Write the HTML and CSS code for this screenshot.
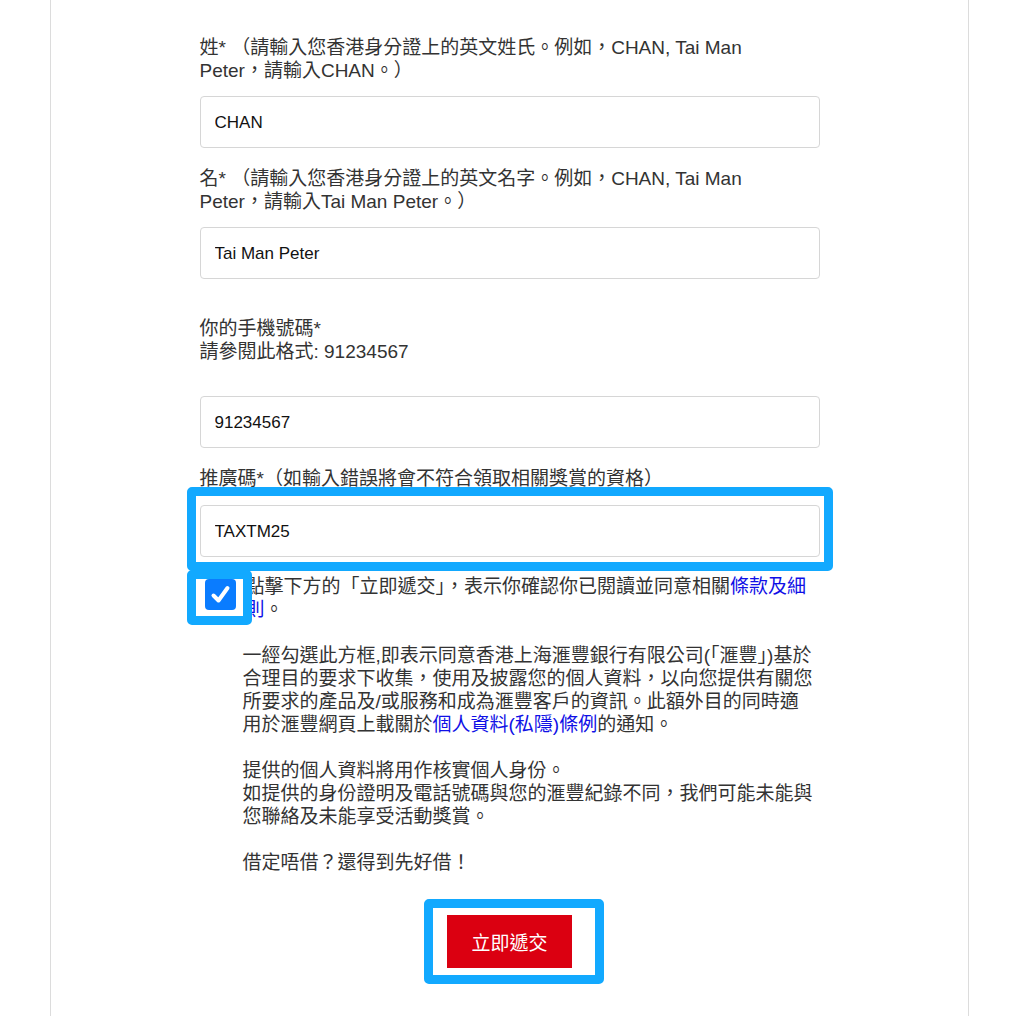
FILE: index.html
```html
<!DOCTYPE html>
<html lang="zh-Hant">
<head>
    <meta charset="UTF-8">
    <meta name="viewport" content="width=device-width, initial-scale=1.0">
    <title>立即遞交</title>
    <link rel="stylesheet" href="styles.css">
</head>
<body>
    <div class="page">
        <form class="form">
            <div class="field">
                <label class="field-label" for="surname">姓* （請輸入您香港身分證上的英文姓氏。例如，CHAN, Tai Man Peter，請輸入CHAN。）</label>
                <input type="text" id="surname" class="input-box" value="CHAN">
            </div>

            <div class="field">
                <label class="field-label" for="givenName">名* （請輸入您香港身分證上的英文名字。例如，CHAN, Tai Man Peter，請輸入Tai Man Peter。）</label>
                <input type="text" id="givenName" class="input-box" value="Tai Man Peter">
            </div>

            <div class="field field-phone">
                <label class="field-label" for="mobile">你的手機號碼*<br>請參閱此格式: 91234567</label>
                <input type="text" id="mobile" class="input-box" value="91234567">
            </div>

            <div class="field field-promo">
                <label class="field-label" for="promoCode">推廣碼*（如輸入錯誤將會不符合領取相關獎賞的資格）</label>
                <div class="highlight highlight-input">
                    <input type="text" id="promoCode" class="input-box" value="TAXTM25">
                </div>
            </div>

            <div class="consent">
                <span class="check-wrap">
                    <span class="check-box">
                        <svg width="31" height="31" viewBox="0 0 31 31">
                            <path d="M8.5 16.5 L13.5 21.5 L22.5 9" fill="none" stroke="#fff" stroke-width="4" stroke-linecap="round" stroke-linejoin="round"/>
                        </svg>
                    </span>
                </span>
                <p class="consent-text">點擊下方的「立即遞交」，表示你確認你已閱讀並同意相關<a href="#">條款及細則</a>。</p>
            </div>

            <div class="disclaimer">
                <p>一經勾選此方框,即表示同意香港上海滙豐銀行有限公司(「滙豐」)基於<br>
                合理目的要求下收集，使用及披露您的個人資料，以向您提供有關您<br>
                所要求的產品及/或服務和成為滙豐客戶的資訊。此額外目的同時適<br>
                用於滙豐網頁上載關於<a href="#">個人資料(私隱)條例</a>的通知。</p>
                <p>提供的個人資料將用作核實個人身份。<br>
                如提供的身份證明及電話號碼與您的滙豐紀錄不同，我們可能未能與<br>
                您聯絡及未能享受活動獎賞。</p>
                <p>借定唔借？還得到先好借！</p>
            </div>

            <div class="actions">
                <div class="highlight highlight-button">
                    <button type="button" class="submit">立即遞交</button>
                </div>
            </div>
        </form>
    </div>
</body>
</html>
```

FILE: styles.css
```css
body {
    margin: 0;
    background-color: #fff;
    color: #333;
    font-family: "Liberation Sans", "Noto Sans CJK TC", sans-serif;
    font-size: 19px;
    line-height: 23px;
}
.page {
    margin-left: 50px;
    width: 917px;
    min-height: 1016px;
    border-left: 1px solid #dcdcdc;
    border-right: 1px solid #dcdcdc;
}
.form {
    width: 620px;
    margin: 0 auto;
    padding-top: 36px;
}
.field {
    margin-bottom: 19px;
}
.field-label {
    display: block;
    margin-bottom: 14px;
    padding-right: 18px; /* labels wrap a little before the input edge */
}
.field-phone {
    margin-top: 38px; /* phone block sits lower */
}
.field-phone .field-label {
    margin-bottom: 33px;
}
.field-promo {
    margin-bottom: 18px;
}
.field-promo .field-label {
    margin-bottom: 15px;
}
.input-box {
    display: block;
    box-sizing: border-box;
    width: 100%;
    height: 52px;
    padding: 2px 14px 0;
    border: 1px solid #d6d6d6;
    border-radius: 4px;
    background: #fff;
    font-family: "Liberation Sans", "Noto Sans CJK TC", sans-serif;
    font-size: 17px;
    color: #111;
}

/* blue callout frames drawn over the page */
.highlight {
    position: relative;
}
.highlight::after {
    content: "";
    position: absolute;
    border: 9px solid #12a9ff;
    border-radius: 5px;
    pointer-events: none;
}
.highlight-input::after {
    top: -18px;
    bottom: -14px;
    left: -13px;
    right: -13px;
}

.consent {
    display: flex;
    align-items: flex-start;
}
.check-wrap {
    position: relative;
    flex: none;
    margin: 4px 0 0 5px;
}
.check-wrap::after {
    content: "";
    position: absolute;
    top: -9px;
    bottom: -15px;
    left: -18px;
    right: -16px;
    border: 9px solid #12a9ff;
    border-radius: 5px;
}
.check-box {
    display: block;
    width: 31px;
    height: 31px;
    border-radius: 4px;
    background-color: #0a7cff;
}
.check-box svg {
    display: block;
}
.consent-text {
    margin: 0 0 0 10px;
}
a {
    color: #1010e6;
    text-decoration: none;
}

.disclaimer {
    margin: 23px -40px 0 43px;
    white-space: nowrap;
}
.disclaimer p {
    margin: 0 0 23px;
}
.disclaimer p:last-child {
    margin-bottom: 0;
}

.actions {
    display: flex;
    justify-content: center;
    margin-top: 41px;
}
.highlight-button::after {
    top: -16px;
    bottom: -16px;
    left: -23px;
    right: -32px;
}
.submit {
    display: block;
    width: 125px;
    height: 53px;
    border: none;
    border-radius: 0;
    background-color: #db0011;
    color: #fff;
    font-family: "Liberation Sans", "Noto Sans CJK TC", sans-serif;
    font-size: 19px;
    cursor: pointer;
}
```
